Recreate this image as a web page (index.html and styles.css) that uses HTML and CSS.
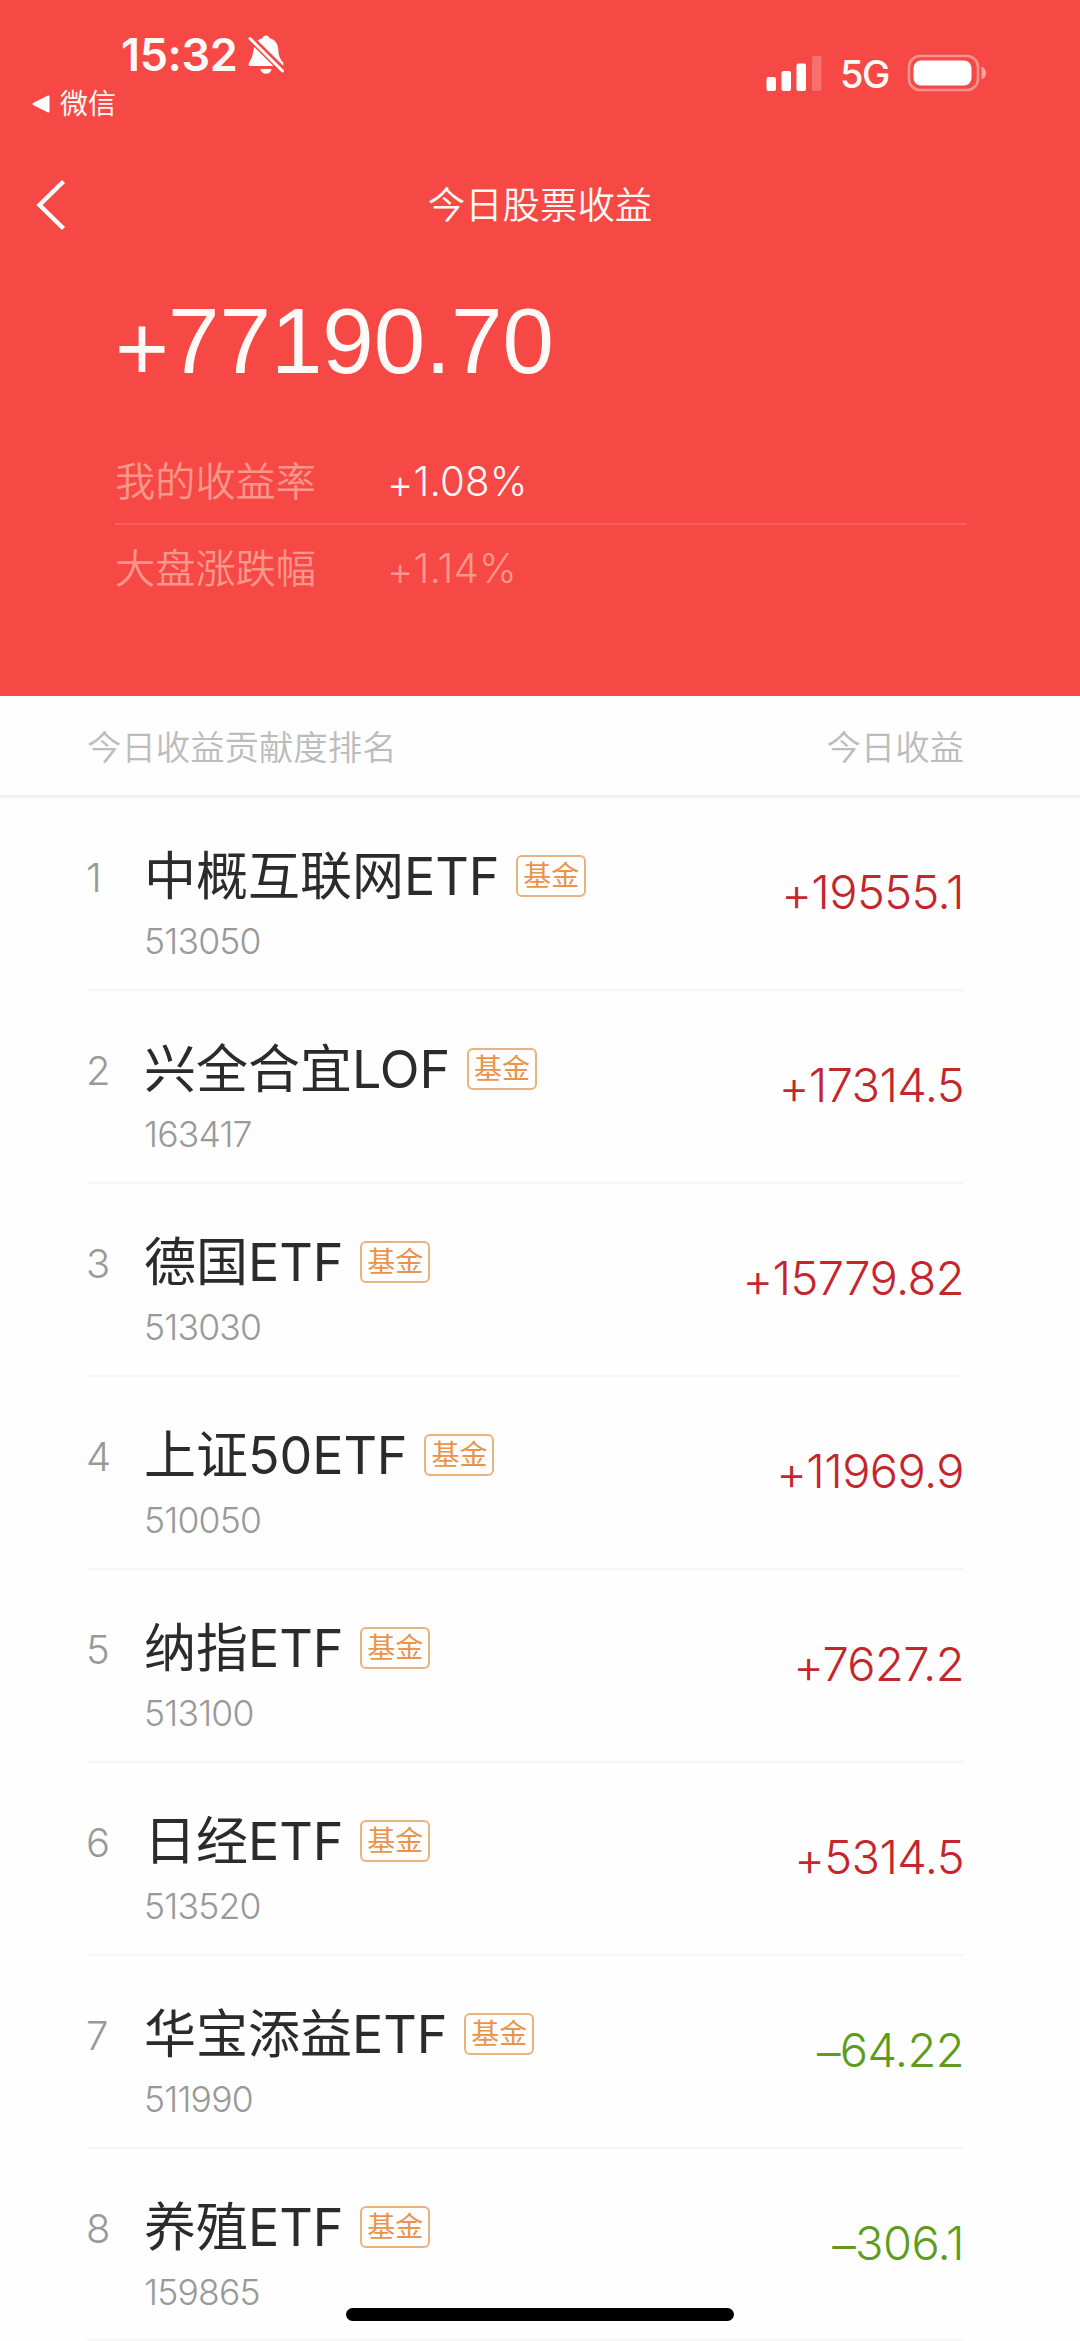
FILE: index.html
```html
<!DOCTYPE html>
<html lang="zh-CN">
<head>
<meta charset="utf-8">
<title>今日股票收益</title>
<link rel="stylesheet" href="styles.css">
</head>
<body>
<div class="screen">
  <header class="hero">
    <div class="status">
      <div class="status-left">
        <div class="clock">
          <span class="time">15:32</span>
          <svg class="bell" viewBox="0 0 36 40" width="36" height="40">
            <path fill="#fff" d="M4.500 20C5.500 17 5.500 15 6 12.500C7 7.500 10 4.300 14.500 3.200C15 1.500 16.300.5 18 .5S21 1.500 21.500 3.200C27 4.500 30 8.500 30.300 14.500C30.600 21 31.500 23 35 27.500C36 29.500 35.500 31 33.500 31H2.500C.8 31 0 29.500 1 27.800C2.500 25.500 3.800 23 4.500 20Z"/>
            <path fill="#fff" d="M12.300 34H23.700C23 37.200 21 38.700 18 38.700S13 37.200 12.300 34Z"/>
            <path stroke="#f64844" stroke-width="7" d="M-1 0L38 38.500"/>
            <path stroke="#fff" stroke-width="3" stroke-linecap="round" d="M2 3.500L34.500 36"/>
          </svg>
        </div>
        <div class="return">
          <svg viewBox="0 0 18 18" width="18" height="18"><path fill="#fff" stroke="#fff" stroke-width="2" stroke-linejoin="round" d="M1.500 9L16.500 1.500V16.500Z"/></svg>
          <span>微信</span>
        </div>
      </div>
      <div class="status-right">
        <svg viewBox="0 0 56 36" width="56" height="36" fill="#fff">
          <rect x="0.500" y="22" width="9.500" height="14" rx="2"/>
          <rect x="15.500" y="16" width="9.500" height="20" rx="2"/>
          <rect x="30.500" y="8.500" width="9.500" height="27.500" rx="2"/>
          <rect x="46" y="1" width="9.500" height="35" rx="2" opacity=".22"/>
        </svg>
        <span class="network">5G</span>
        <svg viewBox="0 0 80 38" width="80" height="38">
          <rect x="2" y="2" width="69" height="34" rx="11" fill="none" stroke="#fff" stroke-opacity=".4" stroke-width="2.600"/>
          <rect x="6.500" y="6.500" width="58" height="25" rx="7.500" fill="#fff"/>
          <path fill="#fff" fill-opacity=".5" d="M74.500 12.500Q79 14.500 79 19T74.500 25.500Z"/>
        </svg>
      </div>
    </div>
    <nav class="nav">
      <svg class="back" viewBox="0 0 32 52" width="32" height="52"><path fill="none" stroke="#fff" stroke-width="4.400" d="M28.500 2.500L4.500 26L28.500 49.500"/></svg>
      <h1 class="title">今日股票收益</h1>
    </nav>
    <div class="total"><span class="sign">+</span>77190.70</div>
    <dl class="rates">
      <div class="rate rate-mine"><dt>我的收益率</dt><dd><span class="sign">+</span>1.08%</dd></div>
      <div class="rate"><dt>大盘涨跌幅</dt><dd><span class="sign">+</span>1.14%</dd></div>
    </dl>
  </header>
  <div class="list-head"><span>今日收益贡献度排名</span><span>今日收益</span></div>
  <main class="list">
    <div class="row"><span class="rank">1</span><div class="fund"><div class="name">中概互联网<b>ETF</b><i class="tag">基金</i></div><div class="code">513050</div></div><span class="gain"><span class="sign">+</span>19555.1</span></div>
    <div class="row"><span class="rank">2</span><div class="fund"><div class="name">兴全合宜<b>LOF</b><i class="tag">基金</i></div><div class="code">163417</div></div><span class="gain"><span class="sign">+</span>17314.5</span></div>
    <div class="row"><span class="rank">3</span><div class="fund"><div class="name">德国<b>ETF</b><i class="tag">基金</i></div><div class="code">513030</div></div><span class="gain"><span class="sign">+</span>15779.82</span></div>
    <div class="row"><span class="rank">4</span><div class="fund"><div class="name">上证<b>50ETF</b><i class="tag">基金</i></div><div class="code">510050</div></div><span class="gain"><span class="sign">+</span>11969.9</span></div>
    <div class="row"><span class="rank">5</span><div class="fund"><div class="name">纳指<b>ETF</b><i class="tag">基金</i></div><div class="code">513100</div></div><span class="gain"><span class="sign">+</span>7627.2</span></div>
    <div class="row"><span class="rank">6</span><div class="fund"><div class="name">日经<b>ETF</b><i class="tag">基金</i></div><div class="code">513520</div></div><span class="gain"><span class="sign">+</span>5314.5</span></div>
    <div class="row"><span class="rank">7</span><div class="fund"><div class="name">华宝添益<b>ETF</b><i class="tag">基金</i></div><div class="code">511990</div></div><span class="gain loss"><span class="sign">–</span>64.22</span></div>
    <div class="row"><span class="rank">8</span><div class="fund"><div class="name">养殖<b>ETF</b><i class="tag">基金</i></div><div class="code">159865</div></div><span class="gain loss"><span class="sign">–</span>306.1</span></div>
  </main>
  <div class="home-bar"></div>
</div>
</body>
</html>
```
FILE: styles.css
```css
* { box-sizing: border-box; }

body {
  margin: 0;
  background: #fefefe;
  font-family: Inter, "Noto Sans CJK SC", sans-serif;
}

.screen {
  position: relative;
  width: 1080px;
  height: 2341px;
  overflow: hidden;
}

.hero {
  height: 696px;
  background: #f64844;
  color: #fffaf8;
}

/* status bar */
.status {
  display: flex;
  justify-content: space-between;
  height: 150px;
  padding: 30px 93px 0 32px;
}
.clock {
  display: flex;
  align-items: center;
  height: 49px;
  padding-left: 89px;
}
.time {
  width: 127px;
  font-size: 45px;
  font-weight: 600;
  line-height: 49px;
  letter-spacing: -0.4px;
}
.return {
  display: flex;
  align-items: center;
  gap: 10px;
  height: 49px;
  padding-top: 1px;
  font-size: 28px;
  line-height: 49px;
}
.status-right {
  display: flex;
  align-items: center;
  height: 86px;
}
.network {
  width: 67px;
  margin-left: 18px;
  padding-top: 2px;
  font-size: 38px;
  font-weight: 500;
  line-height: 44px;
  letter-spacing: -1.5px;
}

/* title bar */
.nav {
  display: grid;
  grid-template-columns: 36px 1fr 36px;
  align-items: center;
  height: 110px;
  padding: 0 35px;
}
.title {
  margin: 0;
  padding-top: 2px;
  font-size: 37.4px;
  font-weight: 350;
  line-height: 60px;
  text-align: center;
}

.sign {
  position: relative;
  top: 2px;
}

.total {
  height: 170px;
  padding: 26px 0 0 114px;
  font-family: "Liberation Sans", Arial, sans-serif;
  font-size: 92.5px;
  line-height: 110px;
}
.total .sign {
  top: 7px;
  left: 1px;
}

.rates {
  width: 852px;
  margin: 0 0 0 115px;
}
.rate {
  display: flex;
  height: 87px;
  padding-top: 19px;
  color: rgba(255, 230, 215, .5);
  font-size: 40.2px;
  font-weight: 350;
  line-height: 50px;
}
.rate-mine {
  height: 95px;
  padding-top: 27px;
  border-bottom: 2px solid rgba(255, 255, 255, .14);
}
.rate dt { width: 272px; }
.rate dd {
  margin: 0;
  letter-spacing: 0.2px;
}
.rate-mine dd { color: #fffaf8; }

/* list */
.list-head {
  display: flex;
  justify-content: space-between;
  height: 102px;
  padding: 27px 116px 0 87px;
  border-bottom: 3px solid #f1f1f1;
  color: #bcbcbc;
  font-size: 34.4px;
  font-weight: 350;
  line-height: 50px;
}
.list { padding: 0 116px 0 87px; }
.row {
  display: grid;
  grid-template-columns: 57px 1fr auto;
  height: 193px;
  border-bottom: 2px solid #f6f6f6;
}
.row:last-child { height: 192px; }
.rank {
  padding-top: 50px;
  margin-left: -1px;
  color: #999;
  font-size: 40px;
  font-weight: 350;
  line-height: 60px;
}
.fund { padding-top: 49px; }
.name {
  display: flex;
  align-items: center;
  color: #2b2b2b;
  font-size: 52px;
  line-height: 60px;
}
.name b {
  font-weight: 370;
  letter-spacing: -0.1px;
}
.tag {
  width: 70px;
  height: 42px;
  margin: -2px 0 0 17px;
  border: 2px solid #eab27c;
  border-radius: 6px;
  color: #e9934b;
  font-size: 28px;
  font-style: normal;
  line-height: 38px;
  text-align: center;
}
.code {
  padding-top: 13px;
  color: #999;
  font-size: 35.5px;
  font-weight: 350;
  line-height: 44px;
  letter-spacing: -0.8px;
}
.gain {
  padding-top: 64px;
  color: #c4262c;
  font-size: 47px;
  font-weight: 350;
  line-height: 60px;
  letter-spacing: -0.6px;
}
.loss { color: #5f9c1c; }

.home-bar {
  position: absolute;
  left: 346px;
  top: 2308px;
  width: 388px;
  height: 13px;
  border-radius: 7px;
  background: #000;
}
```
